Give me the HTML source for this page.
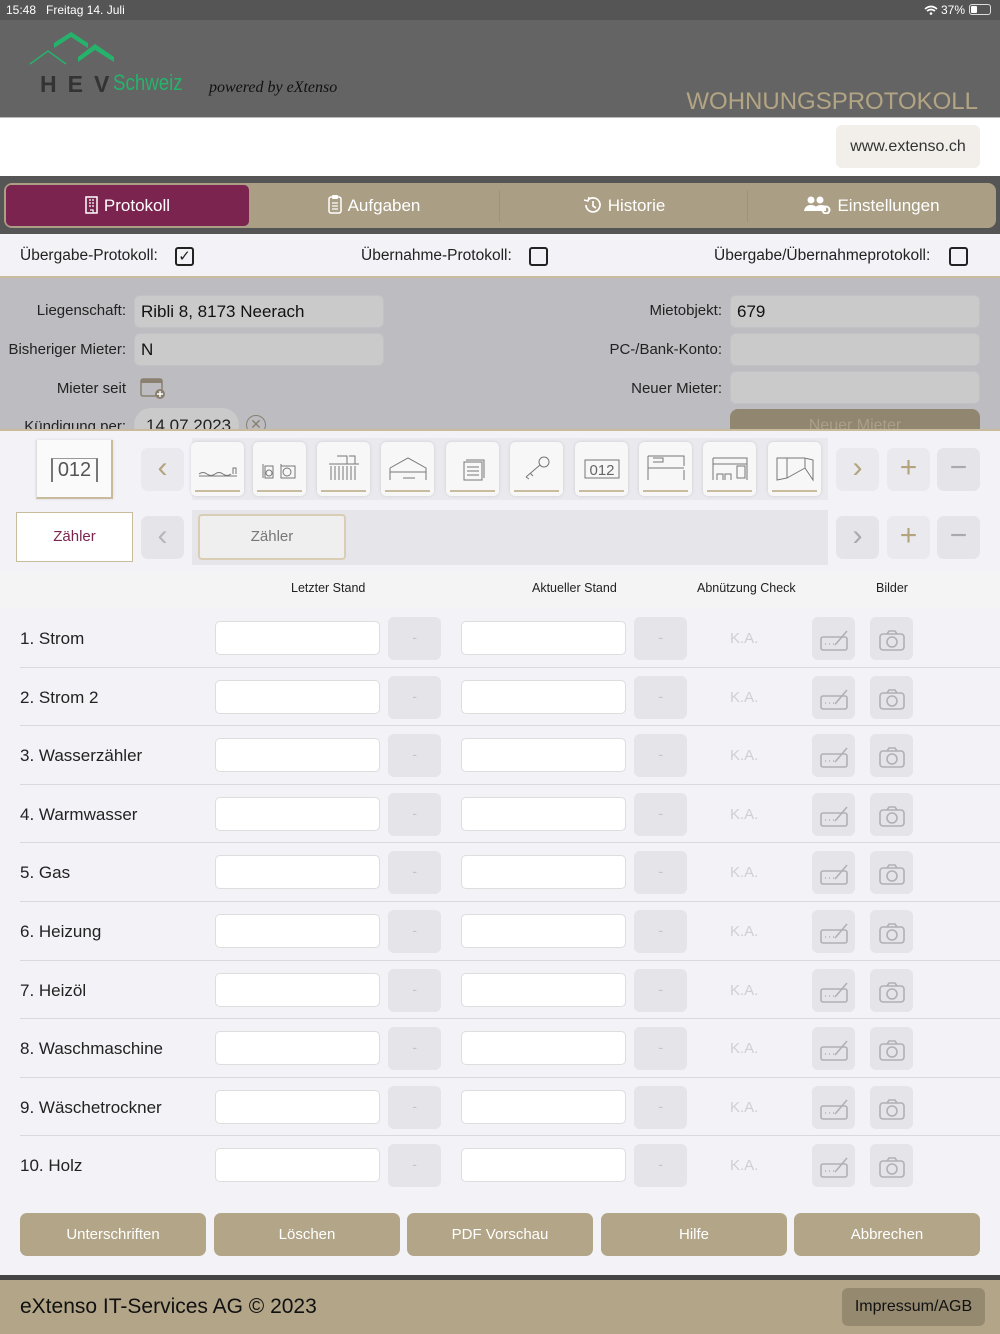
<!DOCTYPE html>
<html><head><meta charset="utf-8">
<style>
*{box-sizing:border-box;margin:0;padding:0}
body{width:1000px;height:1334px;position:relative;overflow:hidden;font-family:"Liberation Sans",sans-serif;background:#f2f2f7;color:#222}
.a{position:absolute}
.lbl{position:absolute;font-size:15px;color:#222;text-align:right}
.inp{position:absolute;background:#cacaca;border:1px solid #c2c2c6;border-radius:6px;font-size:17px;padding:6px 6px;color:#111}
.th{position:absolute;top:442px;width:53px;height:54px;background:#f7f7f8;border-radius:5px;box-shadow:0 0 3px rgba(0,0,0,.12)}
.th:after{content:"";position:absolute;left:4px;right:4px;bottom:4px;height:2px;background:#c9bc9c}
.th svg{position:absolute;left:6px;top:10px}
.nb{position:absolute;width:43px;height:43px;background:#e9e9ee;border-radius:7px;color:#b4a47e;font-size:30px;text-align:center;line-height:40px;font-weight:300}
.row{position:absolute;left:0;width:1000px;height:58.6px}
.row .n{position:absolute;left:20px;top:20px;font-size:17px}
.row .i1,.row .i2{position:absolute;top:12px;width:165px;height:34px;background:#fff;border:1px solid #ddd;border-radius:5px}
.row .i1{left:215px}.row .i2{left:461px}
.row .d1,.row .d2,.row .s,.row .c{position:absolute;top:8px;width:53px;height:43px;background:#e4e4e9;border-radius:6px;color:#c4c4c8;text-align:center;line-height:40px;font-size:14px}
.row .d1{left:388px}.row .d2{left:634px}
.row .s{left:812px;width:43px}.row .c{left:870px;width:43px}
.row svg{position:absolute;left:7px;top:8px}
.row .ka{position:absolute;left:730px;top:21px;font-size:15px;color:#d0d0d3}
.row .ln{position:absolute;left:20px;right:0;bottom:0;height:1px;background:#d9d9de}
.btn{position:absolute;top:1213px;width:186px;height:43px;background:#b2a588;border-radius:7px;color:#fff;font-size:15px;text-align:center;line-height:43px}
.tab{position:absolute;top:185px;height:41px;color:#fff;font-size:17px;line-height:41px;text-align:center}
.tab svg{vertical-align:-3px;margin-right:6px}
</style></head><body>
<svg width="0" height="0" style="position:absolute"><defs>
<g id="sg"><rect x="2" y="12" width="26" height="13" rx="2" fill="none" stroke="#b0b0b5" stroke-width="1.6"/><path d="M6 19h1M10 19h1M14 19h1M16 20l12-14" stroke="#b0b0b5" stroke-width="1.6" fill="none"/></g>
<g id="cm"><rect x="3" y="9" width="24" height="16" rx="3" fill="none" stroke="#b0b0b5" stroke-width="1.6"/><path d="M10 9l2-3h6l2 3" fill="none" stroke="#b0b0b5" stroke-width="1.6"/><circle cx="15" cy="17" r="5" fill="none" stroke="#b0b0b5" stroke-width="1.6"/></g>
</defs></svg>
<!-- status -->
<div class="a" style="left:0;top:0;width:1000px;height:20px;background:#555;color:#fff;font-size:12px">
<span class="a" style="left:6px;top:3px">15:48&nbsp;&nbsp; Freitag 14. Juli</span>
<svg class="a" style="left:924px;top:5px" width="14" height="10"><path d="M1 4q6-5 12 0M3 6q4-3 8 0" stroke="#fff" stroke-width="1.6" fill="none"/><circle cx="7" cy="8.5" r="1.3" fill="#fff"/></svg>
<span class="a" style="left:941px;top:3px">37%</span>
<span class="a" style="left:969px;top:4px;width:22px;height:11px;border:1px solid #ddd;border-radius:3px"><span class="a" style="left:1px;top:1px;width:6px;height:7px;background:#fff;border-radius:1px"></span></span>
</div>
<!-- header -->
<div class="a" style="left:0;top:20px;width:1000px;height:97px;background:#646464">
<svg class="a" style="left:28px;top:10px" width="90" height="40"><polygon points="26,13 43,2 60,13 60,18 43,7 26,18" fill="#25b36c"/><polygon points="50,27 67,14 86,27 86,32 67,20 50,32" fill="#25b36c"/><polyline points="2,34 20,21 38,34" fill="none" stroke="#25b36c" stroke-width="1.5"/></svg>
<div class="a" style="left:40px;top:51px;font-size:23px;font-weight:bold;color:#333;letter-spacing:11px">HEV</div>
<div class="a" style="left:113px;top:50px;font-size:22px;color:#25b36c;transform:scaleX(.85);transform-origin:left">Schweiz</div>
<div class="a" style="left:209px;top:59px;font-size:16px;font-style:italic;color:#111;font-family:'Liberation Serif',serif">powered by eXtenso</div>
<div class="a" style="right:22px;top:68px;font-size:24px;color:#b3a583">WOHNUNGSPROTOKOLL</div>
</div>
<div class="a" style="left:0;top:117px;width:1000px;height:59px;background:#fff;border-top:1px solid #bbb"></div>
<div class="a" style="left:836px;top:125px;width:144px;height:43px;background:#f2efea;border-radius:6px;font-size:16px;line-height:43px;text-align:center;color:#333">www.extenso.ch</div>
<!-- tabs -->
<div class="a" style="left:0;top:176px;width:1000px;height:58px;background:#555"></div>
<div class="a" style="left:4px;top:183px;width:992px;height:45px;background:#aa9e84;border-radius:8px"></div>
<div class="a" style="left:6px;top:185px;width:243px;height:41px;background:#7b244f;border-radius:5px"></div>
<div class="tab" style="left:6px;width:243px"><svg width="13" height="18"><rect x="1" y="1" width="11" height="16" fill="none" stroke="#fff" stroke-width="1.5"/><path d="M4 4h2M7 4h2M4 7h2M7 7h2M4 10h2M7 10h2M5 14h3v3" stroke="#fff" stroke-width="1.3"/></svg>Protokoll</div>
<div class="tab" style="left:250px;width:248px"><svg width="14" height="20"><rect x="1" y="3" width="12" height="16" rx="2" fill="none" stroke="#fff" stroke-width="1.5"/><rect x="4" y="1" width="6" height="4" rx="1" fill="#fff"/><path d="M4 9h6M4 12h6M4 15h6" stroke="#fff" stroke-width="1.2"/></svg>Aufgaben</div>
<div class="a" style="left:499px;top:190px;width:1px;height:32px;background:#9d927a"></div>
<div class="tab" style="left:500px;width:248px"><svg width="19" height="18"><path d="M3 9a7 7 0 1 0 2-5" fill="none" stroke="#fff" stroke-width="1.7"/><path d="M1 4l4 1 1-4" fill="none" stroke="#fff" stroke-width="1.5"/><path d="M10 5v5l3 2" fill="none" stroke="#fff" stroke-width="1.7"/></svg>Historie</div>
<div class="a" style="left:747px;top:190px;width:1px;height:32px;background:#9d927a"></div>
<div class="tab" style="left:748px;width:248px"><svg width="27" height="18"><circle cx="7" cy="4" r="3.5" fill="#fff"/><circle cx="16" cy="4" r="3.5" fill="#fff"/><path d="M0 15q1-6 7-6t7 6zM10 15q1-6 7-6t5 4v2z" fill="#fff"/><circle cx="22" cy="14" r="3.5" fill="none" stroke="#fff" stroke-width="2"/></svg>Einstellungen</div>
<!-- checkbox row -->
<div class="a" style="left:0;top:234px;width:1000px;height:44px;background:#f2f2f7;border-bottom:2px solid #c9bc9c;font-size:15.5px">
<span class="a" style="left:20px;top:13px">Übergabe-Protokoll:</span>
<span class="a" style="left:175px;top:13px;width:19px;height:19px;border:2px solid #222;border-radius:3px;font-size:15px;line-height:15px;text-align:center">✓</span>
<span class="a" style="left:361px;top:13px">Übernahme-Protokoll:</span>
<span class="a" style="left:529px;top:13px;width:19px;height:19px;border:2px solid #222;border-radius:3px"></span>
<span class="a" style="left:714px;top:13px">Übergabe/Übernahmeprotokoll:</span>
<span class="a" style="left:949px;top:13px;width:19px;height:19px;border:2px solid #222;border-radius:3px"></span>
</div>
<!-- form -->
<div class="a" style="left:0;top:278px;width:1000px;height:152px;background:#bdbcc1;overflow:hidden">
<div class="lbl" style="left:0;width:126px;top:24px">Liegenschaft:</div>
<div class="inp" style="left:134px;top:17px;width:250px;height:33px">Ribli 8, 8173 Neerach</div>
<div class="lbl" style="left:0;width:126px;top:63px">Bisheriger Mieter:</div>
<div class="inp" style="left:134px;top:55px;width:250px;height:33px">N</div>
<div class="lbl" style="left:0;width:126px;top:102px">Mieter seit</div>
<svg class="a" style="left:140px;top:98px" width="28" height="24"><rect x="1" y="3" width="21" height="17" rx="2" fill="none" stroke="#8a8070" stroke-width="1.5"/><rect x="1" y="3" width="21" height="4" fill="#8a8070"/><circle cx="20" cy="18" r="5" fill="#8a8070"/><path d="M20 15v6M17 18h6" stroke="#fff" stroke-width="1.4"/></svg>
<div class="lbl" style="left:0;width:126px;top:140px">Kündigung per:</div>
<div class="a" style="left:134px;top:130px;width:105px;height:34px;background:#cacaca;border-radius:17px;font-size:17px;padding:8px 12px">14.07.2023</div>
<div class="a" style="left:246px;top:137px;width:20px;height:20px;border:1.5px solid #8a8070;border-radius:50%;color:#8a8070;font-size:14px;text-align:center;line-height:17px">✕</div>
<div class="lbl" style="left:560px;width:162px;top:24px">Mietobjekt:</div>
<div class="inp" style="left:730px;top:17px;width:250px;height:33px">679</div>
<div class="lbl" style="left:560px;width:162px;top:63px">PC-/Bank-Konto:</div>
<div class="inp" style="left:730px;top:55px;width:250px;height:33px"></div>
<div class="lbl" style="left:560px;width:162px;top:102px">Neuer Mieter:</div>
<div class="inp" style="left:730px;top:93px;width:250px;height:33px"></div>
<div class="a" style="left:730px;top:131px;width:250px;height:34px;background:#918670;border-radius:8px;color:#aaa08a;font-size:16px;text-align:center;line-height:34px">Neuer Mieter</div>
</div>
<div class="a" style="left:0;top:429px;width:1000px;height:2px;background:#c9bc9c"></div>
<!-- icon row -->
<div class="a" style="left:36px;top:440px;width:77px;height:59px;background:#fafafa;border-right:2px solid #c9bc9c;border-bottom:2px solid #c9bc9c;border-left:1px solid #ddd;box-shadow:0 0 3px rgba(0,0,0,.1)"></div>
<div class="a" style="left:51px;top:458px;width:47px;height:24px;border-left:2px solid #777;border-right:2px solid #777;border-top:1px solid #999;font-size:20px;line-height:22px;text-align:center;color:#555">012</div>
<div class="nb" style="left:141px;top:448px">‹</div>
<div class="a" style="left:192px;top:438px;width:636px;height:62px;background:#e9e9ee"></div>
<div class="th" style="left:191px"><svg width="42" height="30"><path d="M2 24h38M2 22q4-3 8 0t8 0 8 0 8 0M36 22v-6h3v6" stroke="#777" fill="none"/></svg></div>
<div class="th" style="left:253px"><svg width="42" height="30"><path d="M4 12v14M6 14h8v12h-8zM22 12v14h14v-12h-14" stroke="#777" fill="none"/><circle cx="10" cy="21" r="3" stroke="#777" fill="none"/><circle cx="28" cy="20" r="4" stroke="#777" fill="none"/></svg></div>
<div class="th" style="left:317px"><svg width="42" height="30"><path d="M6 12h30M8 14v14M12 14v14M16 14v14M20 14v14M24 14v14M28 14v14M32 14v14M14 4h10v8M26 4h6v8" stroke="#777" fill="none"/></svg></div>
<div class="th" style="left:381px"><svg width="42" height="30"><path d="M3 16l18-10 18 10v12M3 16v12M3 20h36M16 26h12" stroke="#777" fill="none"/></svg></div>
<div class="th" style="left:446px"><svg width="42" height="30"><path d="M12 10h18v18h-18zM15 15h12M15 19h12M15 23h12M14 8h18v18" stroke="#777" fill="none"/></svg></div>
<div class="th" style="left:510px"><svg width="42" height="30"><circle cx="28" cy="10" r="5" stroke="#777" fill="none"/><path d="M24 13l-14 12M14 21l3 3M10 25l3 2" stroke="#777" fill="none"/></svg></div>
<div class="th" style="left:575px"><svg width="42" height="30"><rect x="4" y="8" width="34" height="18" stroke="#777" fill="none"/><text x="21" y="23" font-size="15" text-anchor="middle" fill="#666" font-family="Liberation Sans">012</text></svg></div>
<div class="th" style="left:639px"><svg width="42" height="30"><path d="M3 4h36v10M3 4v24M3 16h36M39 18v10M8 6h10v4h-10" stroke="#777" fill="none"/></svg></div>
<div class="th" style="left:703px"><svg width="42" height="30"><path d="M4 6h34v22M4 6v22M4 12h34M8 28v-6h6v6M16 28v-6h6v6M28 14h8v12h-8z" stroke="#777" fill="none"/></svg></div>
<div class="th" style="left:768px"><svg width="42" height="30"><path d="M3 6l10 0 0 20-10 2zM13 6h18v10M31 6l8 2v20l-8-12M13 26l18-10" stroke="#777" fill="none"/></svg></div>
<div class="nb" style="left:836px;top:448px">›</div>
<div class="nb" style="left:887px;top:448px">+</div>
<div class="nb" style="left:937px;top:448px;background:#e4e4e9;color:#aaa">−</div>
<!-- Zähler row -->
<div class="a" style="left:16px;top:512px;width:117px;height:50px;background:#fff;border:1px solid #c9bc9c;color:#7b244f;font-size:15px;text-align:center;line-height:48px">Zähler</div>
<div class="nb" style="left:141px;top:516px;background:#e4e4e9;color:#b5b5ba">‹</div>
<div class="a" style="left:192px;top:510px;width:636px;height:55px;background:#e5e5ea"></div>
<div class="a" style="left:198px;top:514px;width:148px;height:46px;background:#efefef;border:2px solid #d9ceb3;border-radius:4px;color:#777;font-size:15px;text-align:center;line-height:42px">Zähler</div>
<div class="nb" style="left:836px;top:516px;background:#e4e4e9;color:#aaa">›</div>
<div class="nb" style="left:887px;top:516px">+</div>
<div class="nb" style="left:937px;top:516px;background:#e4e4e9;color:#aaa">−</div>
<!-- table header -->
<div class="a" style="left:0;top:572px;width:1000px;height:36px;background:#f4f4f5;font-size:12.5px;color:#222">
<span class="a" style="left:291px;top:9px">Letzter Stand</span>
<span class="a" style="left:532px;top:9px">Aktueller Stand</span>
<span class="a" style="left:697px;top:9px">Abnützung Check</span>
<span class="a" style="left:876px;top:9px">Bilder</span>
</div>
<!-- rows -->
<div class="row" style="top:609px"><span class="n">1. Strom</span><i class="i1"></i><i class="d1">-</i><i class="i2"></i><i class="d2">-</i><span class="ka">K.A.</span><i class="s"><svg width="30" height="30"><use href="#sg"/></svg></i><i class="c"><svg width="30" height="30"><use href="#cm"/></svg></i><i class="ln"></i></div>
<div class="row" style="top:667.6px"><span class="n">2. Strom 2</span><i class="i1"></i><i class="d1">-</i><i class="i2"></i><i class="d2">-</i><span class="ka">K.A.</span><i class="s"><svg width="30" height="30"><use href="#sg"/></svg></i><i class="c"><svg width="30" height="30"><use href="#cm"/></svg></i><i class="ln"></i></div>
<div class="row" style="top:726.2px"><span class="n">3. Wasserzähler</span><i class="i1"></i><i class="d1">-</i><i class="i2"></i><i class="d2">-</i><span class="ka">K.A.</span><i class="s"><svg width="30" height="30"><use href="#sg"/></svg></i><i class="c"><svg width="30" height="30"><use href="#cm"/></svg></i><i class="ln"></i></div>
<div class="row" style="top:784.8px"><span class="n">4. Warmwasser</span><i class="i1"></i><i class="d1">-</i><i class="i2"></i><i class="d2">-</i><span class="ka">K.A.</span><i class="s"><svg width="30" height="30"><use href="#sg"/></svg></i><i class="c"><svg width="30" height="30"><use href="#cm"/></svg></i><i class="ln"></i></div>
<div class="row" style="top:843.4px"><span class="n">5. Gas</span><i class="i1"></i><i class="d1">-</i><i class="i2"></i><i class="d2">-</i><span class="ka">K.A.</span><i class="s"><svg width="30" height="30"><use href="#sg"/></svg></i><i class="c"><svg width="30" height="30"><use href="#cm"/></svg></i><i class="ln"></i></div>
<div class="row" style="top:902px"><span class="n">6. Heizung</span><i class="i1"></i><i class="d1">-</i><i class="i2"></i><i class="d2">-</i><span class="ka">K.A.</span><i class="s"><svg width="30" height="30"><use href="#sg"/></svg></i><i class="c"><svg width="30" height="30"><use href="#cm"/></svg></i><i class="ln"></i></div>
<div class="row" style="top:960.6px"><span class="n">7. Heizöl</span><i class="i1"></i><i class="d1">-</i><i class="i2"></i><i class="d2">-</i><span class="ka">K.A.</span><i class="s"><svg width="30" height="30"><use href="#sg"/></svg></i><i class="c"><svg width="30" height="30"><use href="#cm"/></svg></i><i class="ln"></i></div>
<div class="row" style="top:1019.2px"><span class="n">8. Waschmaschine</span><i class="i1"></i><i class="d1">-</i><i class="i2"></i><i class="d2">-</i><span class="ka">K.A.</span><i class="s"><svg width="30" height="30"><use href="#sg"/></svg></i><i class="c"><svg width="30" height="30"><use href="#cm"/></svg></i><i class="ln"></i></div>
<div class="row" style="top:1077.8px"><span class="n">9. Wäschetrockner</span><i class="i1"></i><i class="d1">-</i><i class="i2"></i><i class="d2">-</i><span class="ka">K.A.</span><i class="s"><svg width="30" height="30"><use href="#sg"/></svg></i><i class="c"><svg width="30" height="30"><use href="#cm"/></svg></i><i class="ln"></i></div>
<div class="row" style="top:1136.4px"><span class="n">10. Holz</span><i class="i1"></i><i class="d1">-</i><i class="i2"></i><i class="d2">-</i><span class="ka">K.A.</span><i class="s"><svg width="30" height="30"><use href="#sg"/></svg></i><i class="c"><svg width="30" height="30"><use href="#cm"/></svg></i></div>
<!-- buttons -->
<div class="btn" style="left:20px">Unterschriften</div>
<div class="btn" style="left:214px">Löschen</div>
<div class="btn" style="left:407px">PDF Vorschau</div>
<div class="btn" style="left:601px">Hilfe</div>
<div class="btn" style="left:794px">Abbrechen</div>
<!-- footer -->
<div class="a" style="left:0;top:1275px;width:1000px;height:5px;background:#444"></div>
<div class="a" style="left:0;top:1280px;width:1000px;height:54px;background:#b2a588">
<span class="a" style="left:20px;top:15px;font-size:21px;color:#111">eXtenso IT-Services AG © 2023</span>
<div class="a" style="left:842px;top:8px;width:143px;height:38px;background:#958a70;border-radius:6px;font-size:16px;line-height:38px;text-align:center;color:#111">Impressum/AGB</div>
</div>
</body></html>
